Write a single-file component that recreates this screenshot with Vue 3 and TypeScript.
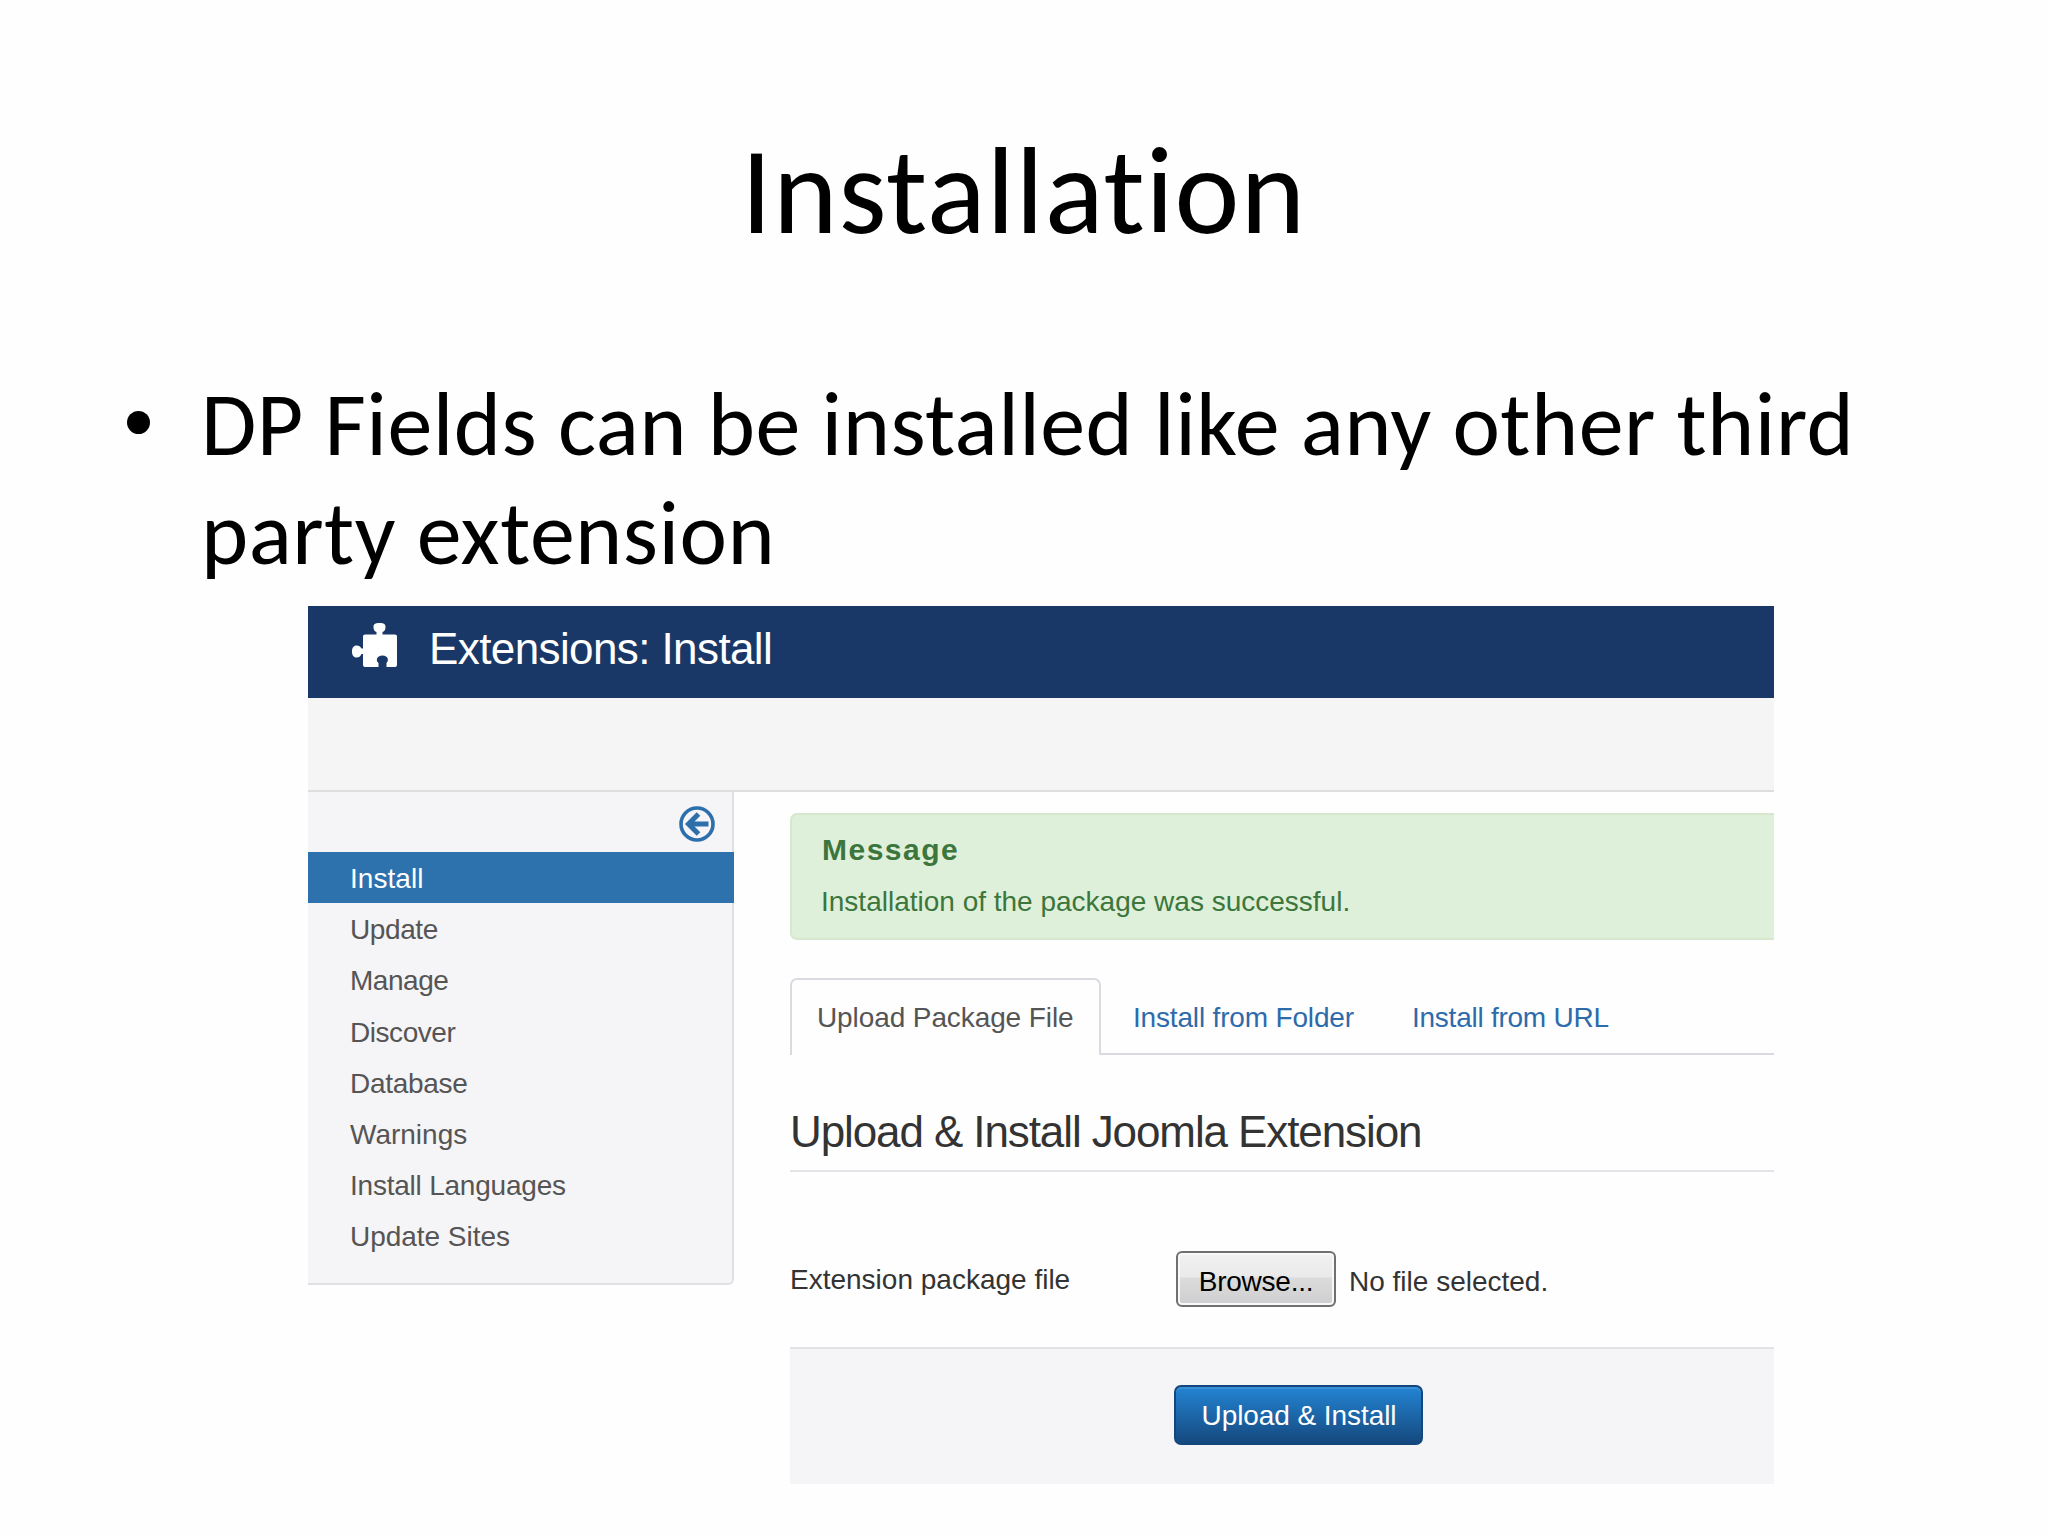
<script setup lang="ts">
interface Item {
  label: string
  spacing: number
}

const menu: Item[] = [
  { label: 'Install', spacing: 0.05 },
  { label: 'Update', spacing: -0.4 },
  { label: 'Manage', spacing: -0.45 },
  { label: 'Discover', spacing: -0.45 },
  { label: 'Database', spacing: -0.3 },
  { label: 'Warnings', spacing: 0 },
  { label: 'Install Languages', spacing: -0.22 },
  { label: 'Update Sites', spacing: -0.03 },
]
</script>

<template>
  <main class="slide">
    <h1>Installation</h1>
    <div class="point">
      <i class="dot"></i>
      <p>DP Fields can be installed like any other third<br />party extension</p>
    </div>

    <section class="shot">
      <header class="bar">
        <svg class="puzzle" viewBox="0 0 46 44" width="46" height="44">
          <path
            fill="#fff"
            d="M13 11.500h11.500V9C22 8.500 21.500 6 21.500 4c0-3 1.500-4 6-4s6 1 6 4c0 2-.5 4.500-3 5v2.500H43q2 0 2 2V42q0 2-2 2h-8.500v-4c2.500-2 2-7.500-4-7.500s-7 5.500-4 7.500v4H13q-2 0-2-2V31H9.500C8.500 33.500 7 34.500 4.500 34.500 1.500 34.500 0 32 0 28.500s1.500-6 4.500-6c2.500 0 4 1 5 3H11v-12q0-2 2-2z"
          />
        </svg>
        <h2>Extensions: Install</h2>
      </header>
      <div class="subbar"></div>

      <div class="body">
        <aside class="side">
          <div class="collapse">
            <svg viewBox="0 0 38 38" width="38" height="38" fill="none" stroke="#2d6fab">
              <circle cx="19" cy="19" r="16" stroke-width="3.6" />
              <path d="M30.500 19H11M20.500 9 10.500 19l10 10" stroke-width="5" />
            </svg>
          </div>
          <nav>
            <a
              v-for="(m, i) in menu"
              :key="m.label"
              :class="{ active: i === 0 }"
              :style="{ letterSpacing: m.spacing + 'px' }"
              >{{ m.label }}</a
            >
          </nav>
        </aside>

        <div class="content">
          <div class="alert">
            <h4>Message</h4>
            <p>Installation of the package was successful.</p>
          </div>

          <div class="tabs">
            <a class="tab current">Upload Package File</a>
            <a class="tab folder">Install from Folder</a>
            <a class="tab url">Install from URL</a>
          </div>

          <h3>Upload &amp; Install Joomla Extension</h3>

          <div class="field">
            <label>Extension package file</label>
            <button class="browse">Browse...</button>
            <span class="nofile">No file selected.</span>
          </div>

          <div class="actions">
            <button class="primary">Upload &amp; Install</button>
          </div>
        </div>
      </div>
    </section>
  </main>
</template>

<style>
body {
  background: #fefefe;
}
</style>

<style scoped>
.slide {
  width: 2048px;
  height: 1536px;
  overflow: hidden;
  background: #fefefe;
  font-family: 'Liberation Sans', sans-serif;
  font-size: 28px;
  color: #333;
  display: flex;
  flex-direction: column;
}
h1, h2, h3, h4, p {
  margin: 0;
  font-weight: 400;
}
h1 {
  margin: 116px 0 0 741px;
  font: 400 123px/150px Carlito, Lato, sans-serif;
  font-variant-ligatures: none;
  letter-spacing: 0.9px;
  color: #000;
}
.point {
  display: flex;
  height: 237px;
  margin-top: 103px;
  padding-left: 127px;
  color: #000;
}
.dot {
  width: 23px;
  height: 23px;
  margin-top: 42px;
  border-radius: 50%;
  background: #000;
}
.point p {
  margin: 1px 0 0 51px;
  font: 400 90px/109px Carlito, Lato, sans-serif;
  font-variant-ligatures: none;
  letter-spacing: 0.45px;
  white-space: nowrap;
}
.shot {
  width: 1466px;
  margin-left: 308px;
}
.bar {
  display: flex;
  height: 92px;
  background: #1a3867;
}
.puzzle {
  margin: 17px 0 0 44px;
}
h2 {
  margin: 18px 0 0 31px;
  font-size: 44px;
  line-height: 50px;
  letter-spacing: -0.6px;
  color: #fff;
  white-space: nowrap;
}
.subbar {
  box-sizing: border-box;
  height: 94px;
  background: #f5f5f5;
  border-bottom: 2px solid #dedee0;
}
.body {
  display: flex;
  height: 692px;
}
.side {
  box-sizing: border-box;
  width: 426px;
  height: 493px;
  background: #f5f4f6;
  border-right: 2px solid #e0dfe3;
  border-bottom: 2px solid #e0dfe3;
  border-radius: 0 0 6px 0;
}
.collapse {
  display: flex;
  justify-content: flex-end;
  height: 60px;
  padding: 13px 16px 0 0;
  box-sizing: border-box;
}
.side nav a {
  display: block;
  height: 51.2px;
  padding-left: 42px;
  line-height: 54px;
  color: #555;
}
.side nav a.active {
  margin-right: -2px;
  background: #2d71ad;
  color: #fff;
}
.content {
  display: flex;
  flex-direction: column;
  width: 984px;
  margin-left: 56px;
}
.alert {
  box-sizing: border-box;
  height: 127px;
  margin-top: 21px;
  padding: 17px 0 0 29px;
  border: 2px solid #d7e7cd;
  border-right: 0;
  border-radius: 7px 0 0 7px;
  background: #def0d9;
  color: #3c763d;
}
.alert h4 {
  padding-left: 1px;
  font-size: 30px;
  font-weight: 700;
  line-height: 36px;
  letter-spacing: 1.5px;
}
.alert p {
  margin-top: 14px;
  line-height: 40px;
}
.tabs {
  display: flex;
  box-sizing: border-box;
  height: 77px;
  margin-top: 38px;
  border-bottom: 2px solid #dcd9e0;
  white-space: nowrap;
}
.tab {
  line-height: 79px;
  color: #2d6bab;
}
.tab.current {
  box-sizing: border-box;
  width: 311px;
  height: 77px;
  padding-left: 25px;
  border: 2px solid #dcd9e0;
  border-bottom: 0;
  border-radius: 7px 7px 0 0;
  background: #fefefe;
  line-height: 75px;
  letter-spacing: -0.1px;
  color: #555;
}
.folder {
  width: 279px;
  margin-left: 32px;
  letter-spacing: -0.17px;
}
.url {
  letter-spacing: -0.25px;
}
h3 {
  height: 65px;
  margin-top: 50px;
  border-bottom: 2px solid #e5e3e7;
  font-size: 44px;
  line-height: 53px;
  letter-spacing: -1.1px;
  color: #333;
  white-space: nowrap;
}
.field {
  display: flex;
  height: 175px;
}
.field label {
  width: 386px;
  margin-top: 88px;
  line-height: 40px;
}
button {
  box-sizing: border-box;
  padding: 0;
  font: inherit;
}
.browse {
  width: 160px;
  height: 56px;
  margin-top: 79px;
  padding-top: 6px;
  border: 2px solid #707070;
  border-radius: 6px;
  box-shadow: inset 0 0 0 2px #f8f8f8;
  background: linear-gradient(#f2f1f2 0, #ebeaeb 46%, #dddcdd 48%, #cecdcf 100%);
  letter-spacing: -0.24px;
  color: #000;
}
.nofile {
  margin: 90px 0 0 13px;
  line-height: 40px;
}
.actions {
  flex: 1;
  border-top: 2px solid #e3e2e6;
  background: #f5f4f6;
}
.primary {
  display: block;
  width: 249px;
  height: 60px;
  margin: 36px 0 0 384px;
  padding: 2px 0 0 1px;
  border: 2px solid #14477d;
  border-radius: 7px;
  background: linear-gradient(#2384d3, #15497f);
  box-shadow: inset 0 2px 0 #3b8fd4;
  letter-spacing: -0.08px;
  color: #fff;
}
</style>
